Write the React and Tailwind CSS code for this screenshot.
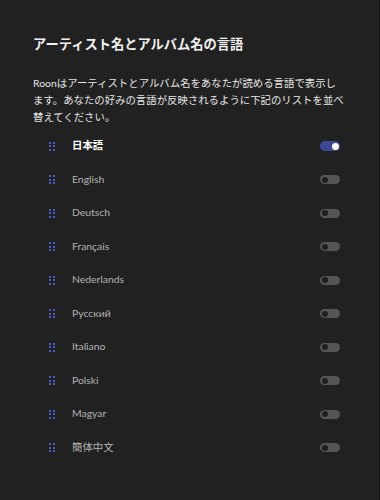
import React from "react";

const langs = [
  { name: "日本語", on: true },
  { name: "English" },
  { name: "Deutsch" },
  { name: "Français" },
  { name: "Nederlands" },
  { name: "Русский" },
  { name: "Italiano" },
  { name: "Polski" },
  { name: "Magyar" },
  { name: "簡体中文" },
];

function Handle() {
  return (
    <div className="grid grid-cols-2 gap-x-[2px] gap-y-[1.5px] w-[6px]">
      {[0, 1, 2, 3, 4, 5].map((i) => (
        <span key={i} className="block w-[2px] h-[2px] bg-[#4b5bc9]" />
      ))}
    </div>
  );
}

function Toggle({ on }) {
  return on ? (
    <div className="w-[20px] h-[10px] rounded-full bg-[#3d4796] flex items-center justify-end pr-[1.5px]">
      <span className="block w-[7px] h-[7px] rounded-full bg-white" />
    </div>
  ) : (
    <div className="w-[20px] h-[9px] rounded-full bg-[#555555] flex items-center pl-[1.5px]">
      <span className="block w-[6px] h-[6px] rounded-full bg-[#1e1e1e]" />
    </div>
  );
}

export default function App() {
  return (
    <div
      className="w-[380px] h-[500px] bg-[#212121] border-r border-[#121212] overflow-hidden pl-[33px] pt-[34px]"
      style={{ fontFamily: '"Lato", "Noto Sans CJK JP", sans-serif' }}
    >
      <h1 className="text-[13.25px] leading-[20px] font-bold text-[#f0f0f0]">
        アーティスト名とアルバム名の言語
      </h1>
      <p className="mt-[20.5px] w-[312px] text-[10.4px] leading-[17px] text-[#e6e6e6]">
        Roonはアーティストとアルバム名をあなたが読める言語で表示します。あなたの好みの言語が反映されるように下記のリストを並べ替えてください。
      </p>
      <div className="mt-[3.75px] pr-[39px]">
        {langs.map((l) => (
          <div key={l.name} className="h-[33.5px] flex items-center">
            <div className="w-[39px] pl-[16px]">
              <Handle />
            </div>
            <span
              className={
                "flex-1 text-[10.4px] " +
                (l.on ? "text-white font-bold" : "text-[#b3b3b3]")
              }
            >
              {l.name}
            </span>
            <Toggle on={l.on} />
          </div>
        ))}
      </div>
    </div>
  );
}
